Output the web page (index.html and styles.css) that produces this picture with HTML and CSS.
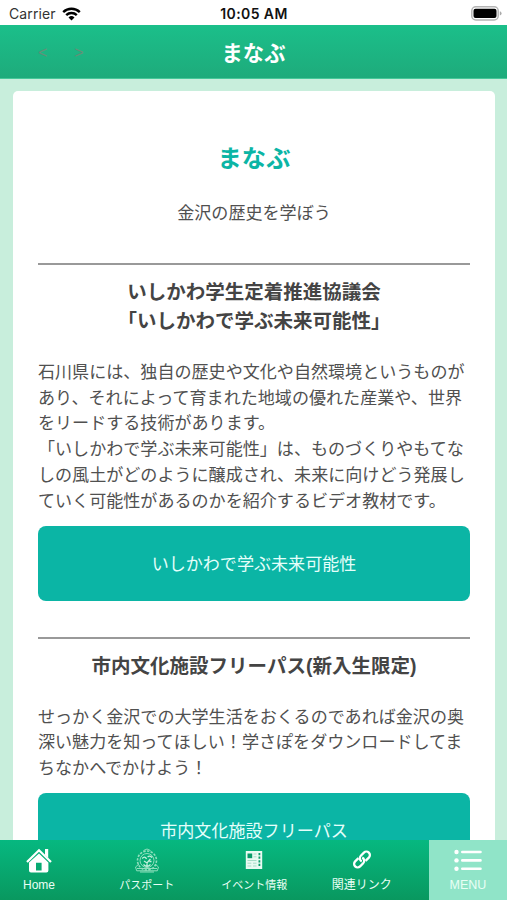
FILE: index.html
```
<!DOCTYPE html>
<html lang="ja">
<head>
  <meta charset="UTF-8" />
  <meta name="viewport" content="width=device-width, initial-scale=1" />
  <title>まなぶ</title>
  <link rel="stylesheet" href="styles.css">
</head>
<body>
  <div class="status-bar">
    <div class="carrier">
      <span>Carrier</span>
      <svg width="19" height="14" viewBox="0 0 19 14">
        <path d="M1.2 5.1a12 12 0 0 1 16.6 0M4.2 8.1a7.6 7.6 0 0 1 10.6 0" fill="none" stroke="#000" stroke-width="2.4" />
        <path d="M6.5 10.4a4.4 4.4 0 0 1 6 0l-3 3z" />
      </svg>
    </div>
    <span class="clock">10:05 AM</span>
    <div class="battery">
      <svg width="31" height="15" viewBox="0 0 31 15">
        <rect x=".8" y=".8" width="26.4" height="13.2" rx="4" fill="#fff" stroke="#b4b4b4" stroke-width="1.5" />
        <rect x="2.5" y="2.7" width="23" height="9.4" rx="2" />
        <path d="M28.8 5.2q1.8.6 1.8 2.2t-1.8 2.2z" fill="#aaa" />
      </svg>
    </div>
  </div>

  <header class="header">
    <div class="history">
      <span>&lt;</span>
      <span>&gt;</span>
    </div>
    <h1>まなぶ</h1>
  </header>

  <main class="content">
    <div class="card">
      <h2>まなぶ</h2>
      <p class="lead">金沢の歴史を学ぼう</p>

      <section>
        <h3>いしかわ学生定着推進協議会<br>「いしかわで学ぶ未来可能性」</h3>
        <p>石川県には、独自の歴史や文化や自然環境というものがあり、それによって育まれた地域の優れた産業や、世界をリードする技術があります。<br>「いしかわで学ぶ未来可能性」は、ものづくりやもてなしの風土がどのように醸成され、未来に向けどう発展していく可能性があるのかを紹介するビデオ教材です。</p>
        <a class="button" href="#">いしかわで学ぶ未来可能性</a>
      </section>

      <section>
        <h3>市内文化施設フリーパス(新入生限定)</h3>
        <p>せっかく金沢での大学生活をおくるのであれば金沢の奥深い魅力を知ってほしい！学さぽをダウンロードしてまちなかへでかけよう！</p>
        <a class="button" href="#">市内文化施設フリーパス</a>
      </section>
    </div>
  </main>

  <nav class="tabs">
    <a class="tab tab-home" href="#">
      <svg width="26" height="26" viewBox="0 0 26 26" fill="#fff">
        <path d="M1 14 13 2.2 25 14" fill="none" stroke="#fff" stroke-width="2.2" />
        <path d="M19 1h3.2v9L19 7z" />
        <path fill-rule="evenodd" d="M13 5.4 22.4 14.6V22.5a2 2 0 0 1-2 2H5a2 2 0 0 1-2-2V14.6zM10 14.8v7.6h5.6v-7.6z" />
      </svg>
      <span>Home</span>
    </a>
    <a class="tab tab-passport" href="#">
      <svg width="26" height="26" viewBox="0 0 26 26" fill="none" stroke="#8fdfbd" stroke-width="1">
        <circle cx="13" cy="12.5" r="7" />
        <circle cx="13" cy="12.5" r="9.5" stroke-width="1.6" stroke-dasharray="2.4 1.3" />
        <path d="M9.5 2.5 13 1l3.5 1.5M5 16 1.5 19l1.2 3.8h20.6l1.2-3.8-3.5-3M3 20.5h20M6 24h14" />
        <path d="M8.2 10.5q2.4-3 4.4.3M13.6 9q2.4-2.2 4.4.6M10 13l3 2 3.4-4M13 15v3M9.5 16.5q3.5 3.5 7 0M15.5 13.5h2" stroke="#c4f1dd" stroke-width="1.3" />
      </svg>
      <span>パスポート</span>
    </a>
    <a class="tab tab-event" href="#">
      <svg width="18" height="26" viewBox="0 0 18 26">
        <rect x=".8" y="3" width="16.4" height="18" fill="#e8faf2" />
        <path d="M2.5 5.5h4.7v4.7H2.5z" fill="#079b69" />
        <path d="M8.5 6h3M8.5 8.8h3M2.5 12.5h9M2.5 15.2h3.8M8 15.2h3.5M2.5 18h3.8M8 18h3.5" stroke="#a5dcc7" stroke-width="1" />
        <path d="M14.4 5v13.5" stroke="#0d9d6c" stroke-width="1.8" stroke-dasharray="2.2 1.4" />
      </svg>
      <span>イベント情報</span>
    </a>
    <a class="tab tab-links" href="#">
      <svg width="20" height="26" viewBox="0 0 20 26">
        <g transform="rotate(-45 10 11.5)" fill="none" stroke="#fff" stroke-width="2.3">
          <path d="M8.5 8H3.8a3.5 3.5 0 0 0 0 7h4.4a3.5 3.5 0 0 0 3.3-4.7" />
          <path d="M11.5 15h4.7a3.5 3.5 0 0 0 0-7h-4.4a3.5 3.5 0 0 0-3.3 4.7" />
        </g>
      </svg>
      <span>関連リンク</span>
    </a>
    <a class="tab tab-menu" href="#">
      <svg width="28" height="26" viewBox="0 0 28 26" fill="#fff">
        <circle cx="2.5" cy="4" r="2.2" />
        <circle cx="2.5" cy="12.4" r="2.2" />
        <circle cx="2.5" cy="20.8" r="2.2" />
        <path d="M8.3 4h18.2M8.3 12.4h18.2M8.3 20.8h18.2" stroke="#fff" stroke-width="2.6" stroke-linecap="round" />
      </svg>
      <span>MENU</span>
    </a>
  </nav>
</body>
</html>
```
FILE: styles.css
```
* {
  box-sizing: border-box;
}
body {
  font-family: "Liberation Sans", "Noto Sans CJK JP", sans-serif;
  background-color: #c8eedc;
  color: #505050;
  margin: 0;
  height: 100vh;
  display: flex;
  flex-direction: column;
  overflow: hidden;
}
h1, h2, h3, p {
  margin: 0;
}
a {
  color: inherit;
  text-decoration: none;
}

/* ステータスバー */
.status-bar {
  flex: none;
  height: 25px;
  display: grid;
  grid-template-columns: 1fr auto 1fr;
  align-items: center;
  padding: 2px 5px 0 9px;
  background: #fff;
  color: #111;
  font-family: Inter, sans-serif;
  font-size: 14px;
}
.carrier {
  display: flex;
  align-items: center;
  gap: 6px;
  color: #333;
  letter-spacing: 0.1px;
}
.clock {
  font-weight: 600;
  letter-spacing: 0.4px;
  margin-right: 3px;
}
.battery {
  display: flex;
  justify-content: flex-end;
}

/* ヘッダー */
.header {
  flex: none;
  height: 54px;
  display: grid;
  grid-template-columns: 1fr auto 1fr;
  align-items: center;
  background: linear-gradient(#1bbf8a, #1eab7b);
  border-bottom: 1px solid #46c899;
}
.history {
  display: flex;
  gap: 27px;
  padding: 3px 0 0 38px;
  color: #648f78;
  font-size: 16px;
}
.header h1 {
  color: #fff;
  font-size: 21.3px;
  font-weight: 700;
}

/* コンテンツ */
.content {
  flex: 1;
  min-height: 0;
  overflow: hidden;
  padding: 12px 12px 0 13px;
}
.card {
  background: #fff;
  border-radius: 5px;
  padding: 50px 25px 40px;
  font-size: 17.07px;
  line-height: 25.8px;
}
.card h2 {
  color: #0bb5a5;
  font-size: 24.3px;
  line-height: 36px;
  text-align: center;
}
.lead {
  margin-top: 24px;
  text-align: center;
}
section {
  margin-top: 36px;
  border-top: 2px solid #999;
}
h3 {
  margin: 13px 0 24px;
  color: #444;
  font-size: 19.5px;
  line-height: 29px;
  text-align: center;
}
.button {
  display: flex;
  align-items: center;
  justify-content: center;
  height: 75px;
  margin-top: 11px;
  padding-top: 3px;
  border-radius: 8px;
  background: #0bb5a5;
  color: #e5fffb;
}

/* タブバー */
.tabs {
  flex: none;
  height: 60px;
  display: flex;
  background: linear-gradient(#06b880, #09985f);
  color: #e9fff5;
  font-size: 11px;
}
.tab {
  flex: none;
  width: 107.5px;
  display: flex;
  flex-direction: column;
  align-items: center;
  gap: 4px;
  padding-top: 8px;
  line-height: 14px;
}
.tab svg {
  display: block;
}
.tab-home {
  width: 93px;
  padding-right: 15px;
}
.tab-home span {
  font-size: 12px;
}
.tab-links span {
  font-size: 12px;
}
.tab-menu {
  width: 78px;
  margin-left: auto;
  background: #90e4c8;
  font-size: 12.5px;
}
```
